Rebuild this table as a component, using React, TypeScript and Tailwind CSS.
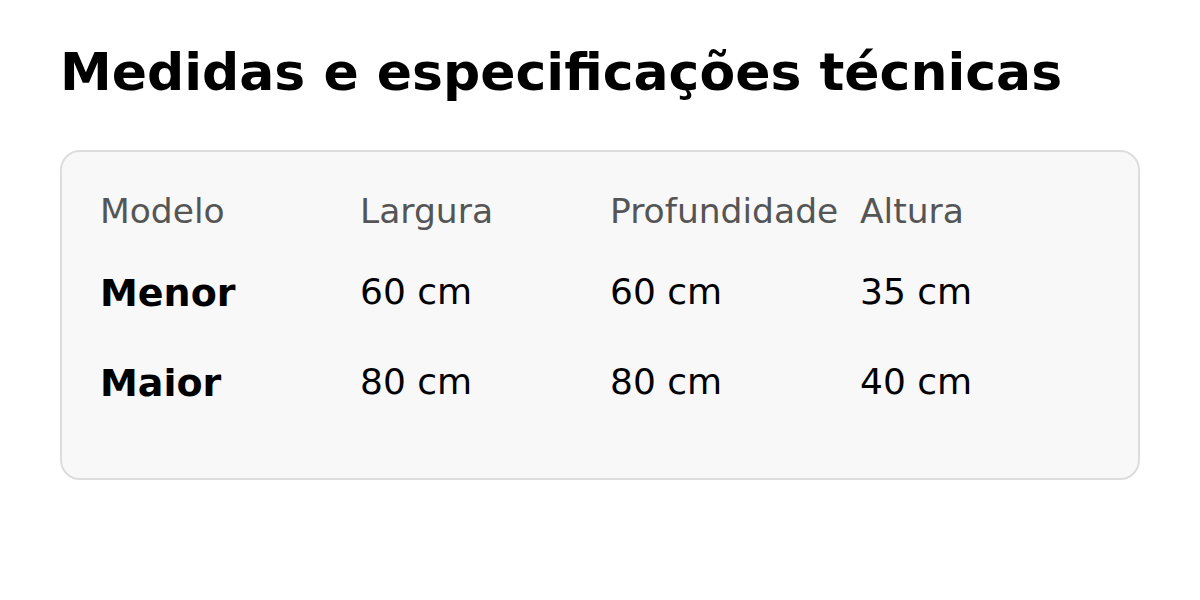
import React from "react";

const rows = [
  { model: "Menor", w: "60 cm", d: "60 cm", h: "35 cm" },
  { model: "Maior", w: "80 cm", d: "80 cm", h: "40 cm" },
];

export default function App() {
  return (
    <div
      className="w-[1200px] h-[600px] bg-white px-[60px] pt-[39px] text-black"
      style={{ fontFamily: '"DejaVu Sans", sans-serif' }}
    >
      <h1 className="text-[52px] font-bold leading-[66px] m-0">
        Medidas e especificações técnicas
      </h1>
      <div className="mt-[45px] w-[1080px] h-[330px] border-2 border-[#dddddd] rounded-[20px] bg-[#f8f8f8] pl-[38px] pt-[34px]">
        <div className="grid grid-cols-[260px_250px_250px_1fr] text-[#555555] text-[34.5px] leading-normal">
          <div>Modelo</div>
          <div>Largura</div>
          <div>Profundidade</div>
          <div>Altura</div>
        </div>
        <div className="mt-[27px] flex flex-col">
          {rows.map((r) => (
            <div
              key={r.model}
              className="grid h-[90px] grid-cols-[260px_250px_250px_1fr] items-start text-[36px] leading-normal"
            >
              <div className="font-bold text-[38px]">{r.model}</div>
              <div>{r.w}</div>
              <div>{r.d}</div>
              <div>{r.h}</div>
            </div>
          ))}
        </div>
      </div>
    </div>
  );
}
